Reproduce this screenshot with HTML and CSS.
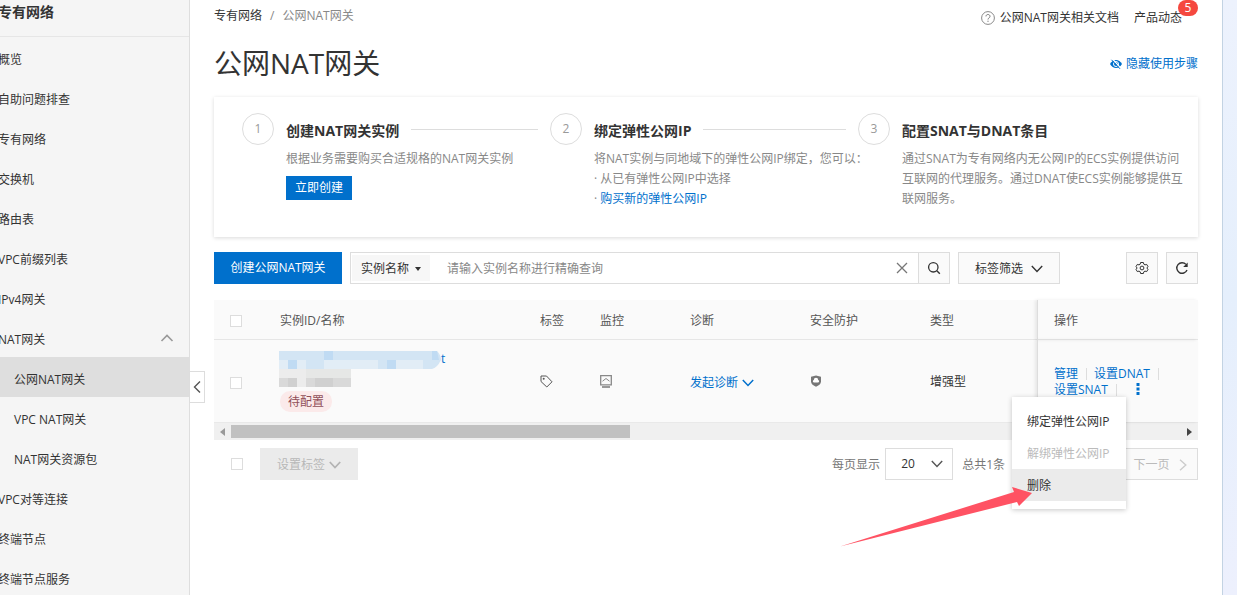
FILE: index.html
```html
<!DOCTYPE html>
<html lang="zh-CN">
	<head>
		<title>公网NAT网关</title>
		<meta charset="UTF-8">
		<meta name="viewport" content="width=device-width, initial-scale=1">
		<link rel="stylesheet" href="styles.css">
	</head>
	<body>
		<nav class="sidebar">
			<div class="sidebar-title">专有网络</div>
			<a class="item" href="#">概览</a>
			<a class="item" href="#">自助问题排查</a>
			<a class="item" href="#">专有网络</a>
			<a class="item" href="#">交换机</a>
			<a class="item" href="#">路由表</a>
			<a class="item" href="#">VPC前缀列表</a>
			<a class="item" href="#">IPv4网关</a>
			<a class="item group" href="#">NAT网关
				<svg width="14" height="8" viewBox="0 0 14 8"><path d="M1.5 7 7 1.5 12.5 7" fill="none" stroke="#999" stroke-width="1.6"/></svg>
			</a>
			<a class="item sub active" href="#">公网NAT网关</a>
			<a class="item sub" href="#">VPC NAT网关</a>
			<a class="item sub" href="#">NAT网关资源包</a>
			<a class="item" href="#">VPC对等连接</a>
			<a class="item" href="#">终端节点</a>
			<a class="item" href="#">终端节点服务</a>
			<button class="collapse" aria-label="收起">
				<svg width="8" height="14" viewBox="0 0 8 14"><path d="M7 1.5 1.5 7 7 12.5" fill="none" stroke="#555" stroke-width="1.4"/></svg>
			</button>
		</nav>
		<main>
			<!-- breadcrumb and help links -->
			<div class="topbar">
				<div class="breadcrumb"><a href="#">专有网络</a><span>/</span><span>公网NAT网关</span></div>
				<div class="links">
					<a href="#"><svg width="14" height="14" viewBox="0 0 14 14"><circle cx="7" cy="7" r="6.4" fill="none" stroke="#888"/><path d="M5 5.4c0-2.6 4-2.5 4 0C9 6.8 7 6.9 7 8.5M7 9.7v1.2" fill="none" stroke="#777"/></svg>公网NAT网关相关文档</a>
					<a class="news" href="#">产品动态<span class="badge">5</span></a>
				</div>
			</div>
			<div class="heading">
				<h1>公网NAT网关</h1>
				<a href="#"><svg width="12" height="10" viewBox="0 0 12 10"><path d="M0 5C3-.4 9-.4 12 5 9 10.4 3 10.4 0 5z" fill="#0070cc"/><circle cx="6" cy="5" r="2.5" fill="none" stroke="#fff"/><path d="M2.5 0l9 10" stroke="#fff" stroke-width="1.2"/><path d="M1.5.8l8.5 9" stroke="#0070cc"/></svg>隐藏使用步骤</a>
			</div>

			<section class="steps">
				<div class="step">
					<span class="num">1</span>
					<div class="text">
						<h2>创建NAT网关实例</h2>
						<p>根据业务需要购买合适规格的NAT网关实例</p>
						<button class="primary small">立即创建</button>
					</div>
				</div>
				<div class="step">
					<span class="num">2</span>
					<div class="text">
						<h2>绑定弹性公网IP</h2>
						<p>将NAT实例与同地域下的弹性公网IP绑定，您可以：<br>· 从已有弹性公网IP中选择<br>· <a href="#">购买新的弹性公网IP</a></p>
					</div>
				</div>
				<div class="step last">
					<span class="num">3</span>
					<div class="text">
						<h2>配置SNAT与DNAT条目</h2>
						<p>通过SNAT为专有网络内无公网IP的ECS实例提供访问互联网的代理服务。通过DNAT使ECS实例能够提供互联网服务。</p>
					</div>
				</div>
			</section>

			<div class="toolbar">
				<button class="primary create">创建公网NAT网关</button>
				<div class="search">
					<div class="field">
						<select aria-label="查询条件"><option>实例名称</option></select>
						<svg width="6" height="4" viewBox="0 0 6 4"><path d="M0 0h6L3 4z" fill="#333"/></svg>
					</div>
					<input type="text" aria-label="实例名称" placeholder="请输入实例名称进行精确查询">
					<button class="clear" aria-label="清除"><svg width="12" height="12" viewBox="0 0 12 12"><path d="M1 1l10 10M11 1 1 11" stroke="#777" stroke-width="1.3"/></svg></button>
					<button class="go" aria-label="搜索"><svg width="14" height="14" viewBox="0 0 14 14"><circle cx="6.3" cy="6.3" r="4.7" fill="none" stroke="#333" stroke-width="1.3"/><path d="M9.8 9.8l3 3" stroke="#333" stroke-width="1.4"/></svg></button>
				</div>
				<button class="filter">标签筛选 <svg width="12" height="8" viewBox="0 0 12 8"><path d="M.8 1 6 6.5 11.2 1" fill="none" stroke="#333" stroke-width="1.4"/></svg></button>
				<div class="tools">
					<button aria-label="设置"><svg width="14" height="14" viewBox="0 0 14 14"><path d="M5.6 1.5h2.8l.4 1.7 1.2.7 1.7-.5 1.3 2.3L11.8 7l1.2 1.3-1.3 2.3-1.7-.5-1.2.7-.4 1.7H5.6l-.4-1.7-1.2-.7-1.7.5L1 8.3 2.2 7 1 5.700l1.300-2.300 1.700.5 1.200-.7z" fill="none" stroke="#333"/><circle cx="7" cy="7" r="1.900" fill="none" stroke="#333"/></svg></button>
					<button aria-label="刷新"><svg width="14" height="14" viewBox="0 0 14 14"><path d="M12 9A5.300 5.300 0 1 1 11 3.400" fill="none" stroke="#333" stroke-width="1.400"/><path d="M12.700 1.500v4.500H8.200z" fill="#333"/></svg></button>
				</div>
			</div>

			<div class="table-wrap">
				<table>
					<colgroup>
						<col class="c-check"><col class="c-name"><col class="c-tag"><col class="c-monitor"><col class="c-wide"><col class="c-wide"><col><col class="c-action">
					</colgroup>
					<thead>
						<tr>
							<th><input type="checkbox" aria-label="全选"></th>
							<th>实例ID/名称</th>
							<th>标签</th>
							<th>监控</th>
							<th>诊断</th>
							<th>安全防护</th>
							<th>类型</th>
							<th class="fixed">操作</th>
						</tr>
					</thead>
					<tbody>
						<tr>
							<td class="low"><input type="checkbox" aria-label="选择实例"></td>
							<td>
								<a class="instance" href="#"><svg width="162" height="36" viewBox="0 0 162 36">
									<path d="M0 0h158q4 4 4 9-4 8-9 9H0z" fill="#d3e5f4"/>
									<path d="M0 9h27v9H0zM45 9h27v9H45zM72 9h27v9H72zM117 9h27v9h-27z" fill="#e2edf6"/>
									<path d="M45 0h9v9h-9zM9 9h9v9H9zM108 9h9v9h-9zM153 0h5l2 9h-7z" fill="#c0dbf3"/>
									<path d="M0 18h72v9H0z" fill="#e6e7e6"/>
									<path d="M0 27h72v9H0z" fill="#d9d9d9"/>
									<path d="M18 18h9v18h-9zM0 18h18v9H0z" fill="#ececec"/>
									<path d="M9 27h9v9H9zM36 27h18v9H36z" fill="#d0d0d0"/>
								</svg>t</a>
								<span class="status">待配置</span>
							</td>
							<td><svg width="13" height="13" viewBox="0 0 13 13"><path d="M1 1h5.500L12 6.800 6.800 12 1 6.500z" fill="none" stroke="#555" stroke-linejoin="round"/><circle cx="3.700" cy="3.700" r="1" fill="#555"/></svg></td>
							<td><svg width="12" height="13" viewBox="0 0 12 13"><path d="M.7.7h10.600v9.100H.7z" fill="none" stroke="#888" stroke-width="1.300"/><path d="M2.500 6.200 6 3.500 9.500 6.200" fill="none" stroke="#888"/><path d="M2 11h8v2H2z" fill="#999"/></svg></td>
							<td class="low"><a class="diagnose" href="#">发起诊断 <svg width="12" height="8" viewBox="0 0 12 8"><path d="M.8 1 6 6.500 11.200 1" fill="none" stroke="#0070cc" stroke-width="1.500"/></svg></a></td>
							<td><svg width="12" height="12" viewBox="0 0 12 12"><path d="M6 .5l5 1.300v4.700c0 2.500-2.500 4.300-5 5.200-2.500-.9-5-2.700-5-5.200V1.800z" fill="#777"/><path d="M3.800 7.500a1.300 1.300 0 0 1 0-2.500 2.200 2.200 0 0 1 4.400 0 1.300 1.300 0 0 1 0 2.500z" fill="#fff"/></svg></td>
							<td class="type">增强型</td>
							<td class="fixed actions">
								<a href="#">管理</a><i></i><a href="#">设置DNAT</a><i></i><br><a href="#">设置SNAT</a><i></i><button class="more" aria-label="更多"><svg width="4" height="12" viewBox="0 0 4 12"><path d="M.5 0h3v3h-3zM.5 4.500h3v3h-3zM.5 9h3v3h-3z" fill="#0070cc"/></svg></button>
								<div class="menu">
									<button>绑定弹性公网IP</button>
									<button disabled>解绑弹性公网IP</button>
									<button class="hover">删除</button>
									<svg class="pointer" width="192" height="60" viewBox="0 0 192 60"><path d="M0 59.500 174 5l-2-5 20 6-13 13-2-4z" fill="#ff5263"/></svg>
								</div>
							</td>
						</tr>
					</tbody>
				</table>
				<div class="scrollbar">
					<svg width="5" height="8" viewBox="0 0 5 8"><path d="M5 0v8L0 4z" fill="#999"/></svg>
					<div class="track"><div class="thumb"></div></div>
					<svg width="5" height="8" viewBox="0 0 5 8"><path d="M0 0v8l5-4z" fill="#444"/></svg>
				</div>
			</div>

			<div class="table-footer">
				<input type="checkbox" aria-label="全选">
				<button class="set-tag" disabled>设置标签 <svg width="12" height="8" viewBox="0 0 12 8"><path d="M.8 1 6 6.500 11.200 1" fill="none" stroke="#b3b3b3" stroke-width="1.800"/></svg></button>
				<div class="pager">
					<label for="page-size">每页显示</label>
					<div class="page-size">
						<select id="page-size"><option>20</option></select>
						<svg width="12" height="8" viewBox="0 0 12 8"><path d="M.8 1 6 6.500 11.200 1" fill="none" stroke="#555" stroke-width="1.400"/></svg>
					</div>
					<span>总共1条</span>
					<button class="next" disabled>下一页 <svg width="8" height="12" viewBox="0 0 8 12"><path d="M1 .8 6.800 6 1 11.200" fill="none" stroke="#ccc" stroke-width="1.400"/></svg></button>
				</div>
			</div>
		</main>
		<div class="edge"></div>
	</body>
</html>
```

FILE: styles.css
```css
* {
	box-sizing: border-box;
}
body {
	margin: 0;
	height: 100vh;
	overflow: hidden;
	display: flex;
	background: #fff;
	color: #333;
	font: 12px/20px "Open Sans", "Noto Sans CJK SC", sans-serif;
}
a {
	color: #0070cc;
	text-decoration: none;
}
button, input, select {
	font: inherit;
	color: inherit;
	border-radius: 0;
}
button {
	display: inline-flex;
	align-items: center;
	justify-content: center;
	padding: 0;
	border: 1px solid #ddd;
	background: #fafafa;
}
select {
	appearance: none;
	border: 0;
	background: transparent;
}
input[type="checkbox"] {
	appearance: none;
	display: block;
	width: 12px;
	height: 12px;
	margin: 0;
	border: 1px solid #ddd;
	background: #fff;
}
svg {
	display: block;
	flex: none;
}

/* Sidebar */
.sidebar {
	position: relative;
	flex: none;
	width: 190px;
	border-right: 1px solid #dedede;
	background: #f5f5f5;
}
.sidebar-title {
	height: 37px;
	border-bottom: 1px solid #e6e6e6;
	font-size: 14px;
	font-weight: bold;
	line-height: 24px;
	text-indent: -2px;
}
.item {
	display: flex;
	align-items: center;
	height: 40px;
	padding-top: 6px;
	color: #333;
	text-indent: -2px;
}
.group {
	justify-content: space-between;
	padding-right: 15px;
}
.group svg {
	margin-bottom: 4px;
}
.sub {
	padding-left: 16px;
}
.active {
	background: #dedede;
}
.collapse {
	position: absolute;
	top: 371px;
	left: 189px;
	z-index: 1;
	width: 16px;
	height: 32px;
	background: #fff;
}

/* Page head */
main {
	flex: 1;
	min-width: 0;
	padding: 0 24px;
}
.topbar, .heading {
	display: flex;
	justify-content: space-between;
	align-items: center;
}
.topbar {
	height: 32px;
}
.topbar a {
	color: #333;
}
.breadcrumb, .links {
	display: flex;
	gap: 8px;
	color: #888;
}
.links {
	gap: 15px;
	padding-top: 4px;
}
.links a, .heading a {
	display: flex;
	align-items: center;
	gap: 5px;
}
.heading a {
	gap: 4px;
	padding-top: 2px;
}
.news {
	position: relative;
	margin-right: 16px;
}
.badge {
	position: absolute;
	top: -8px;
	right: -16px;
	width: 20px;
	height: 16px;
	border-radius: 8px;
	background: #f5483f;
	color: #fff;
	line-height: 16px;
	text-align: center;
}
.heading {
	height: 62px;
	margin-bottom: 3px;
}
h1 {
	margin: 0;
	font-size: 28px;
	font-weight: normal;
	line-height: 40px;
}

/* Steps */
.steps {
	display: flex;
	min-height: 140px;
	padding: 16px 12px 16px 28px;
	margin-bottom: 15px;
	box-shadow: 0 1px 4px rgba(0, 0, 0, .15);
}
.step {
	display: flex;
	flex: 308 1 0;
	gap: 12px;
	min-width: 0;
}
.step.last {
	flex-grow: 328;
}
.num {
	flex: none;
	width: 32px;
	height: 32px;
	border: 1px solid #ddd;
	border-radius: 50%;
	color: #999;
	line-height: 30px;
	text-align: center;
}
.text {
	flex: 1;
	min-width: 0;
}
h2 {
	display: flex;
	align-items: center;
	gap: 12px;
	padding-top: 2px;
	margin: 0 12px 2px 0;
	font-size: 14px;
	line-height: 32px;
	white-space: nowrap;
}
.step:not(.last) h2::after {
	content: "";
	flex: 1;
	height: 1px;
	margin-bottom: 4px;
	background: #ddd;
}
.text p {
	margin: 0;
	color: #888;
}
.step:not(.last) p {
	white-space: nowrap;
}
.primary {
	height: 32px;
	padding: 0 9px;
	border: 0;
	background: #0070cc;
	color: #fff;
}
.create {
	min-width: 128px;
}
.small {
	height: 24px;
	margin-top: 7px;
}

/* Toolbar */
.toolbar {
	display: flex;
	gap: 8px;
	height: 32px;
	margin-bottom: 16px;
}
.search {
	display: flex;
	align-items: center;
	flex: 0 1 600px;
	border: 1px solid #ddd;
}
.field {
	display: flex;
	align-items: center;
	gap: 5px;
	height: 26px;
	padding: 2px 9px 0;
	margin-left: 1px;
	background: #f7f7f7;
}
.field select {
	padding: 0;
}
.search input {
	flex: 1;
	min-width: 0;
	height: 28px;
	padding: 0 17px;
	border: 0;
	outline: 0;
}
.search input::placeholder {
	color: #888;
}
.clear {
	width: 33px;
	border: 0;
	background: none;
}
.go {
	align-self: stretch;
	width: 31px;
	border-width: 0 0 0 1px;
}
.filter {
	gap: 8px;
	width: 102px;
	padding-top: 1px;
}
.tools {
	display: flex;
	gap: 8px;
	margin-left: auto;
}
.tools button {
	width: 32px;
}

/* Table */
table {
	width: 100%;
	table-layout: fixed;
	border-collapse: separate;
	border-spacing: 0;
	background: #fafafa;
}
.c-check {
	width: 50px;
}
.c-name {
	width: 260px;
}
.c-tag {
	width: 60px;
}
.c-monitor {
	width: 90px;
}
.c-wide {
	width: 120px;
}
.c-action {
	width: 161px;
}
th, td {
	padding: 0 16px;
	text-align: left;
	font-weight: normal;
}
th {
	height: 40px;
	padding-top: 2px;
	border-bottom: 1px solid #e6e6e6;
	color: #555;
}
td {
	height: 82px;
}
td.low {
	padding-top: 4px;
}
td.type, td.actions {
	padding-top: 2px;
}
.fixed {
	position: relative;
	border-left: 1px solid #ddd;
	box-shadow: -2px 0 3px rgba(0, 0, 0, .08);
}
.instance {
	display: flex;
	line-height: 16px;
	margin-left: -1px;
}
.status {
	display: inline-block;
	padding: 0 8px;
	margin-top: 4px;
	border-radius: 10px;
	background: #fbeaea;
	color: #914f58;
	line-height: 21px;
}
.diagnose {
	display: flex;
	align-items: center;
	gap: 4px;
}
.actions {
	line-height: 16px;
	white-space: nowrap;
}
.actions i {
	display: inline-block;
	width: 1px;
	height: 12px;
	margin: 0 7px 0 8px;
	background: #ddd;
	vertical-align: -2px;
}
.more {
	width: 20px;
	margin-left: 4px;
	border: 0;
	background: none;
	vertical-align: -1px;
}

/* Row menu */
.menu {
	position: absolute;
	top: 57px;
	right: 72px;
	z-index: 2;
	width: 114px;
	padding: 8px 0;
	background: #fff;
	box-shadow: 0 1px 5px rgba(0, 0, 0, .22);
}
.menu button {
	display: flex;
	justify-content: flex-start;
	width: 100%;
	height: 32px;
	padding: 1px 15px 0;
	border: 0;
	background: none;
}
.menu button:disabled {
	color: #bbb;
}
.menu button.hover {
	background: #ebebeb;
}
.pointer {
	position: absolute;
	top: 90px;
	right: 94px;
}

/* Scrollbar */
.scrollbar {
	display: flex;
	align-items: center;
	justify-content: space-between;
	gap: 6px;
	height: 18px;
	padding: 0 6px;
	border-top: 1px solid #e9e9e9;
	background: #f0f0f0;
}
.track {
	flex: 1;
}
.thumb {
	width: 42%;
	height: 13px;
	background: #c1c1c1;
}

/* Table footer */
.table-footer {
	display: flex;
	align-items: center;
	gap: 17px;
	height: 32px;
	padding-left: 17px;
	margin-top: 8px;
}
.set-tag {
	gap: 4px;
	width: 98px;
	height: 32px;
	padding-top: 1px;
	border: 0;
	background: #ebebeb;
	color: #b8b8b8;
}
.pager {
	display: flex;
	align-items: center;
	margin-left: auto;
	color: #777;
}
.pager label, .pager span {
	padding-top: 2px;
}
.page-size {
	position: relative;
	width: 68px;
	height: 32px;
	margin: 0 9px 0 5px;
	border: 1px solid #ddd;
	color: #333;
}
.page-size select {
	width: 100%;
	height: 30px;
	padding: 0 15px;
}
.page-size svg {
	position: absolute;
	top: 11px;
	right: 9px;
	pointer-events: none;
}
.next {
	gap: 9px;
	width: 76px;
	height: 32px;
	padding-top: 1px;
	margin-left: 117px;
	color: #bbb;
}
.edge {
	flex: none;
	width: 15px;
	border-left: 1px solid #c3d3e3;
	background: linear-gradient(#edf2fd, #e5effc 50%, #edf0fd);
}
```
